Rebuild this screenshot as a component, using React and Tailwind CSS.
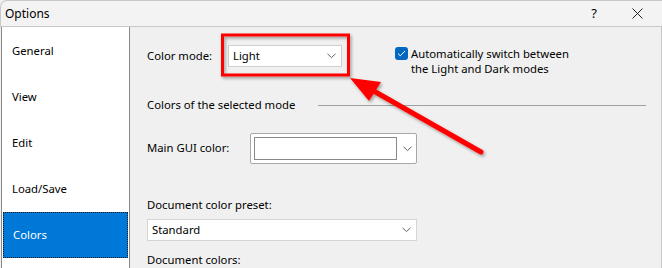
import React from "react";

const font = { fontFamily: '"Segoe UI", "Noto Sans", sans-serif' };

function Chevron({ className = "" }) {
  return (
    <svg width="9" height="6" viewBox="0 0 9 6" className={className}>
      <polyline points="0.5,0.8 4.5,4.6 8.5,0.8" fill="none" stroke="#606060" strokeWidth="1" />
    </svg>
  );
}

const items = ["General", "View", "Edit", "Load/Save", "Colors"];

export default function App() {
  return (
    <div className="relative w-[662px] h-[268px] overflow-hidden bg-[#f0f0f0] text-[11.3px] text-black" style={font}>
      {/* title bar */}
      <div className="h-[27px] flex items-center bg-[#f3f3f3] border-b border-[#9a9a9a] rounded-tl-[7px] border-t border-l border-[#c8c8c8]">
        <span className="pl-[4px] text-[12px]">Options</span>
        <span className="ml-auto mr-[35px] text-[13px]">?</span>
        <svg width="11" height="11" viewBox="0 0 11 11" className="mr-[19px]">
          <path d="M0.5 0.5 L10.5 10.5 M10.5 0.5 L0.5 10.5" stroke="#222" strokeWidth="1" />
        </svg>
      </div>

      <div className="flex h-[241px] border-r border-[#c8c8c8]">
        {/* left nav */}
        <div className="ml-[1px] w-[129px] h-full bg-white border-l border-r border-[#8a8a8a] pt-[1px]">
          {items.map((it) => (
            <div
              key={it}
              className={
                it === "Colors"
                  ? "h-[46px] mx-[1px] flex items-center pl-[9px] bg-[#0078d7] text-white border border-dotted border-[#1a1a1a]"
                  : "h-[46px] flex items-center pl-[10px]"
              }
            >
              {it}
            </div>
          ))}
        </div>

        {/* right content */}
        <div className="flex-1 pl-[17px] pr-[15px] flex flex-col">
          <div className="flex items-start mt-[18px]">
            <div className="flex items-center">
              <span className="w-[81px]">Color mode:</span>
              <div className="w-[114px] h-[22px] bg-white border border-[#d0d0d0] flex items-center pl-[4px] pr-[5px]">
                <span>Light</span>
                <Chevron className="ml-auto" />
              </div>
            </div>
            <div className="flex items-start ml-[53px] mt-[2px]">
              <div className="w-[13px] h-[13px] rounded-[3px] bg-[#0067c0] flex items-center justify-center">
                <svg width="9" height="7" viewBox="0 0 9 7">
                  <polyline points="1,3.6 3.3,5.8 8,1" fill="none" stroke="white" strokeWidth="1" />
                </svg>
              </div>
              <div className="ml-[3px] leading-[15px] -mt-[1px]">
                <div>Automatically switch between</div>
                <div>the Light and Dark modes</div>
              </div>
            </div>
          </div>

          <div className="flex items-center mt-[21px] h-[16px]">
            <span>Colors of the selected mode</span>
            <div className="flex-1 ml-[23px] border-t border-[#a0a0a0]"></div>
          </div>

          <div className="flex items-center mt-[20px]">
            <span className="w-[103px]">Main GUI color:</span>
            <div className="w-[167px] h-[31px] bg-white border border-[#a8a8a8] rounded-[2px] flex items-center pl-[3px] pr-[4px]">
              <div className="w-[143px] h-[23px] border border-[#888]"></div>
              <Chevron className="ml-auto" />
            </div>
          </div>

          <div className="mt-[33px] h-[16px] leading-[16px]">Document color preset:</div>
          <div className="mt-[6px] w-[270px] h-[22px] bg-white border border-[#d4d4d4] flex items-center pl-[4px] pr-[5px]">
            <span>Standard</span>
            <Chevron className="ml-auto" />
          </div>
          <div className="mt-[11px] h-[16px] leading-[16px]">Document colors:</div>
        </div>
      </div>

      {/* annotation overlay */}
      <svg className="absolute left-0 top-0 pointer-events-none" width="662" height="268">
        <defs>
          <filter id="sh" x="-20%" y="-20%" width="140%" height="140%">
            <feDropShadow dx="1.5" dy="2" stdDeviation="1.5" floodColor="#000" floodOpacity="0.35" />
          </filter>
        </defs>
        <g filter="url(#sh)">
          <rect x="222.5" y="35" width="126" height="40" fill="none" stroke="#ff0000" strokeWidth="3" />
          <line x1="481" y1="152" x2="372" y2="90" stroke="#ff0000" strokeWidth="5" strokeLinecap="round" />
          <polygon points="350,78 381,82 369,101" fill="#ff0000" />
        </g>
      </svg>
    </div>
  );
}
